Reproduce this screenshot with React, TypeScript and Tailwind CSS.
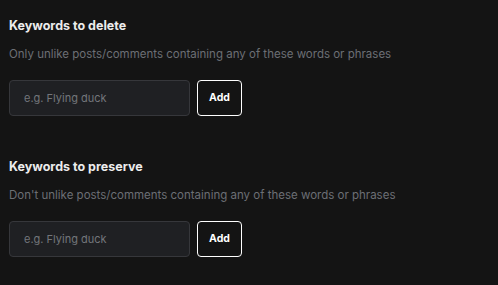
import { useState } from "react";

const SECTIONS = [
  {
    title: "Keywords to delete",
    desc: "Only unlike posts/comments containing any of these words or phrases",
  },
  {
    title: "Keywords to preserve",
    desc: "Don't unlike posts/comments containing any of these words or phrases",
  },
];

function KeywordSection({ title, desc }: { title: string; desc: string }) {
  const [value, setValue] = useState("");
  return (
    <div>
      <h2 className="text-[12.5px] font-bold leading-5 text-[#ececec]">{title}</h2>
      <p className="mt-[8px] text-[11.5px] leading-5 text-[#6c6f74]">{desc}</p>
      <div className="mt-[16px] flex items-center gap-[7px]">
        <input
          value={value}
          onChange={(e) => setValue(e.target.value)}
          placeholder="e.g. Flying duck"
          className="h-9 w-[181px] rounded-[4px] border border-[#36373b] bg-[#1f2023] px-[14px] text-[11px] text-[#d4d4d4] outline-none placeholder:text-[#73767b]"
        />
        <button className="h-9 w-[45px] rounded-[4px] border border-white bg-[#141414] text-[10.5px] font-bold text-white">
          Add
        </button>
      </div>
    </div>
  );
}

export default function App() {
  return (
    <div
      className="min-h-screen bg-[#141414] px-[9px] pt-[16px]"
      style={{ fontFamily: "Inter, 'Noto Sans', sans-serif" }}
    >
      <div className="flex flex-col gap-[41px]">
        {SECTIONS.map((s) => (
          <KeywordSection key={s.title} title={s.title} desc={s.desc} />
        ))}
      </div>
    </div>
  );
}
